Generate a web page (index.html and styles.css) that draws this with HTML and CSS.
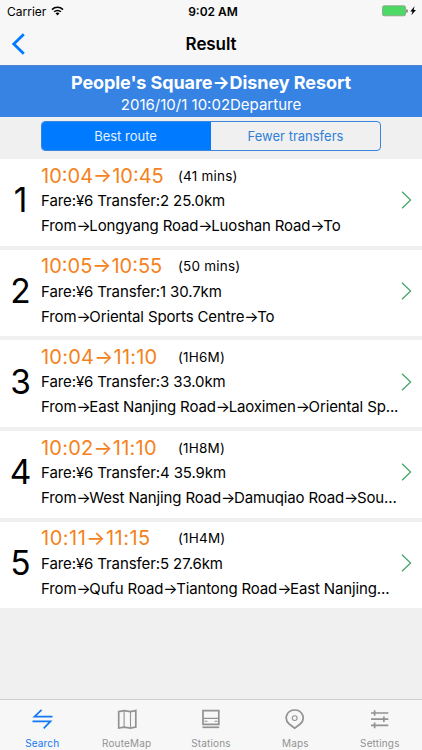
FILE: index.html
```html
<!DOCTYPE html>
<html lang="en">
<head>
    <meta charset="UTF-8">
    <meta name="viewport" content="width=device-width, initial-scale=1.0">
    <title>Result</title>
    <link rel="stylesheet" href="styles.css">
</head>
<body>
    <div class="statusbar">
        <div class="carrier">
            <span>Carrier</span>
            <svg class="wifi" width="13" height="10" viewBox="0 0 13 10">
                <path d="M1 3.6C4 .6 9 .6 12 3.6M3.1 5.8c1.900-1.900 4.900-1.900 6.800 0" fill="none" stroke="#000" stroke-width="1.500"/>
                <path d="M4.500 7.300c1.200-1.100 2.800-1.100 4 0l-2 2.200z"/>
            </svg>
        </div>
        <div class="clock">9:02 AM</div>
        <div class="battery">
            <svg width="35" height="12" viewBox="0 0 35 12">
                <rect x=".5" y=".8" width="23" height="10" rx="1.500" fill="#4cd964" stroke="#8f9a91" stroke-width=".8"/>
                <path d="M24.500 4c1.500.5 1.500 3.500 0 4z" fill="#333"/>
                <path d="M32.500 1.200L28.300 6.500h2.200L29.300 10.300 34 5h-2.300z" fill="#000"/>
            </svg>
        </div>
    </div>

    <div class="navbar">
        <svg class="back" width="14" height="22" viewBox="0 0 14 22">
            <path d="M12.800 1.200L2.800 11l10 9.800" fill="none" stroke="#007aff" stroke-width="2.800"/>
        </svg>
        <h1>Result</h1>
    </div>

    <div class="trip">
        <div class="trip-name">People's Square<i>→</i>Disney Resort</div>
        <div class="trip-time">2016/10/1 10:02Departure</div>
    </div>

    <div class="segments">
        <div class="segment active">Best route</div>
        <div class="segment">Fewer transfers</div>
    </div>

    <div class="routes">
        <div class="route">
            <div class="number">1</div>
            <div class="info">
                <div class="times"><span class="hours">10:04<i>→</i>10:45</span><span class="duration">(41 mins)</span></div>
                <div class="fare">Fare:¥6 Transfer:2 25.0km</div>
                <div class="path">From<i>→</i>Longyang Road<i>→</i>Luoshan Road<i>→</i>To</div>
            </div>
            <svg class="chevron" width="11" height="18" viewBox="0 0 11 18"><path d="M1 .7L9.600 9 1 17.300"/></svg>
        </div>
        <div class="route">
            <div class="number">2</div>
            <div class="info">
                <div class="times"><span class="hours">10:05<i>→</i>10:55</span><span class="duration">(50 mins)</span></div>
                <div class="fare">Fare:¥6 Transfer:1 30.7km</div>
                <div class="path">From<i>→</i>Oriental Sports Centre<i>→</i>To</div>
            </div>
            <svg class="chevron" width="11" height="18" viewBox="0 0 11 18"><path d="M1 .7L9.600 9 1 17.300"/></svg>
        </div>
        <div class="route">
            <div class="number">3</div>
            <div class="info">
                <div class="times"><span class="hours wide">10:04<i>→</i>11:10</span><span class="duration">(1H6M)</span></div>
                <div class="fare">Fare:¥6 Transfer:3 33.0km</div>
                <div class="path">From<i>→</i>East Nanjing Road<i>→</i>Laoximen<i>→</i>Oriental Sp...</div>
            </div>
            <svg class="chevron" width="11" height="18" viewBox="0 0 11 18"><path d="M1 .7L9.600 9 1 17.300"/></svg>
        </div>
        <div class="route">
            <div class="number">4</div>
            <div class="info">
                <div class="times"><span class="hours wide">10:02<i>→</i>11:10</span><span class="duration">(1H8M)</span></div>
                <div class="fare">Fare:¥6 Transfer:4 35.9km</div>
                <div class="path">From<i>→</i>West Nanjing Road<i>→</i>Damuqiao Road<i>→</i>Sou...</div>
            </div>
            <svg class="chevron" width="11" height="18" viewBox="0 0 11 18"><path d="M1 .7L9.600 9 1 17.300"/></svg>
        </div>
        <div class="route">
            <div class="number">5</div>
            <div class="info">
                <div class="times"><span class="hours wider">10:11<i>→</i>11:15</span><span class="duration">(1H4M)</span></div>
                <div class="fare">Fare:¥6 Transfer:5 27.6km</div>
                <div class="path">From<i>→</i>Qufu Road<i>→</i>Tiantong Road<i>→</i>East Nanjing...</div>
            </div>
            <svg class="chevron" width="11" height="18" viewBox="0 0 11 18"><path d="M1 .7L9.600 9 1 17.300"/></svg>
        </div>
    </div>

    <div class="tabbar">
        <div class="tab active">
            <svg width="22" height="22" viewBox="0 0 22 22">
                <path d="M21.500 8.600H3.500L10.600 1.900M1.500 13.300h18L12.700 20.300"/>
            </svg>
            <span>Search</span>
        </div>
        <div class="tab">
            <svg width="22" height="22" viewBox="0 0 22 22">
                <path d="M2.700 3.600l5.400-1 6.400 1 5.300-1v16.500l-5.300 1-6.400-1-5.400 1z"/>
                <path class="thin" d="M8.100 3v16M14.500 3.500v16"/>
            </svg>
            <span>RouteMap</span>
        </div>
        <div class="tab">
            <svg width="22" height="22" viewBox="0 0 22 22">
                <path d="M3 2.600h15.800v13.800H3z"/>
                <path class="thin" d="M3 10.400h16M4.500 13.200h3M14.500 13.200h3"/>
                <path d="M2.500 19.300h16.700"/>
            </svg>
            <span>Stations</span>
        </div>
        <div class="tab">
            <svg width="22" height="22" viewBox="0 0 22 22">
                <path d="M10.700 20.200L5.200 16C-.6 11 2.700 2 10.700 2s11.300 9 5.500 14z"/>
                <circle class="thin" cx="10.700" cy="10.100" r="2.400"/>
            </svg>
            <span>Maps</span>
        </div>
        <div class="tab">
            <svg width="22" height="22" viewBox="0 0 22 22">
                <path d="M2 5h17.300M2 11.200h17.300M2 17.400h17.300"/>
                <path d="M5.600 2.200v5.600M14.900 8.400V14M5.600 14.600v5.600"/>
            </svg>
            <span>Settings</span>
        </div>
    </div>
</body>
</html>
```

FILE: styles.css
```css
* {
    box-sizing: border-box;
}
body {
    margin: 0;
    height: 750px;
    display: flex;
    flex-direction: column;
    overflow: hidden;
    background: #f0f0f0;
    color: #000;
    font-family: Inter, "Noto Sans", sans-serif;
}
i {
    font-style: normal;
}
svg {
    display: block;
}
.statusbar {
    height: 22px;
    display: grid;
    grid-template-columns: 1fr auto 1fr;
    align-items: center;
    padding: 0 5px 0 7px;
    background: #f7f7f7;
    font-size: 12px;
}
.carrier {
    display: flex;
    align-items: center;
    gap: 5px;
}
.clock {
    padding-left: 2px;
    font-weight: 600;
}
.battery {
    justify-self: end;
}
.navbar {
    height: 43px;
    display: grid;
    grid-template-columns: 1fr auto 1fr;
    align-items: center;
    padding: 0 11px;
    background: #f7f7f7;
}
.navbar h1 {
    margin: 0;
    font-size: 17px;
    font-weight: 600;
    letter-spacing: -0.1px;
}
.trip {
    height: 52px;
    padding-top: 6px;
    border-top: 1px solid #4c86d0;
    background: #3683e4;
    color: #fff;
    text-align: center;
    white-space: nowrap;
}
.trip-name {
    font-size: 18px;
    font-weight: 700;
    line-height: 22px;
    letter-spacing: -0.07px;
}
.trip-time {
    font-size: 15px;
    line-height: 21px;
}
.segments {
    display: grid;
    grid-template-columns: 1fr 1fr;
    height: 30px;
    margin: 4px 41px 8px;
    border: 1px solid #3a86df;
    border-radius: 4px;
    overflow: hidden;
    font-size: 13px;
    line-height: 28px;
    text-align: center;
    color: #2f7fd8;
}
.segment.active {
    padding-right: 2px;
    background: #007aff;
    color: #e4f1ff;
}
.routes {
    display: flex;
    flex-direction: column;
    gap: 4px;
}
.route {
    height: 86.700px;
    display: flex;
    align-items: center;
    padding-right: 10px;
    background: #fff;
}
.number {
    flex: 0 0 41px;
    font-size: 33.500px;
    line-height: 40px;
    text-align: center;
    padding-bottom: 4px;
}
.info {
    flex: 1;
    min-width: 0;
    align-self: flex-start;
    padding-top: 4px;
    white-space: nowrap;
}
.times {
    display: flex;
    align-items: center;
    height: 25px;
}
.hours {
    width: 137px;
    color: #f58220;
    font-size: 20px;
    font-kerning: none;
}
.hours.wide {
    letter-spacing: 0.23px;
}
.hours.wider {
    letter-spacing: 0.5px;
}
.duration {
    font-size: 13.500px;
    letter-spacing: 0.2px;
}
.fare,
.path {
    font-size: 15px;
    line-height: 25px;
    letter-spacing: -0.1px;
}
.path {
    letter-spacing: -0.14px;
}
.path i {
    letter-spacing: -1.400px;
}
.chevron {
    margin-bottom: 4px;
    fill: none;
    stroke: #4aa56c;
    stroke-width: 1.300;
}
.tabbar {
    height: 51px;
    margin-top: auto;
    display: flex;
    border-top: 1px solid #cfcfcf;
    background: #f7f7f7;
}
.tab {
    flex: 1;
    display: flex;
    flex-direction: column;
    align-items: center;
    padding-top: 8px;
    color: #929292;
    font-size: 10px;
    letter-spacing: 0.15px;
}
.tab span {
    margin-top: 7px;
    line-height: 12px;
}
.tab svg {
    fill: none;
    stroke: currentColor;
    stroke-width: 1.700;
}
.tab .thin {
    stroke-width: 1.100;
}
.tab.active {
    color: #1279f3;
}
```
